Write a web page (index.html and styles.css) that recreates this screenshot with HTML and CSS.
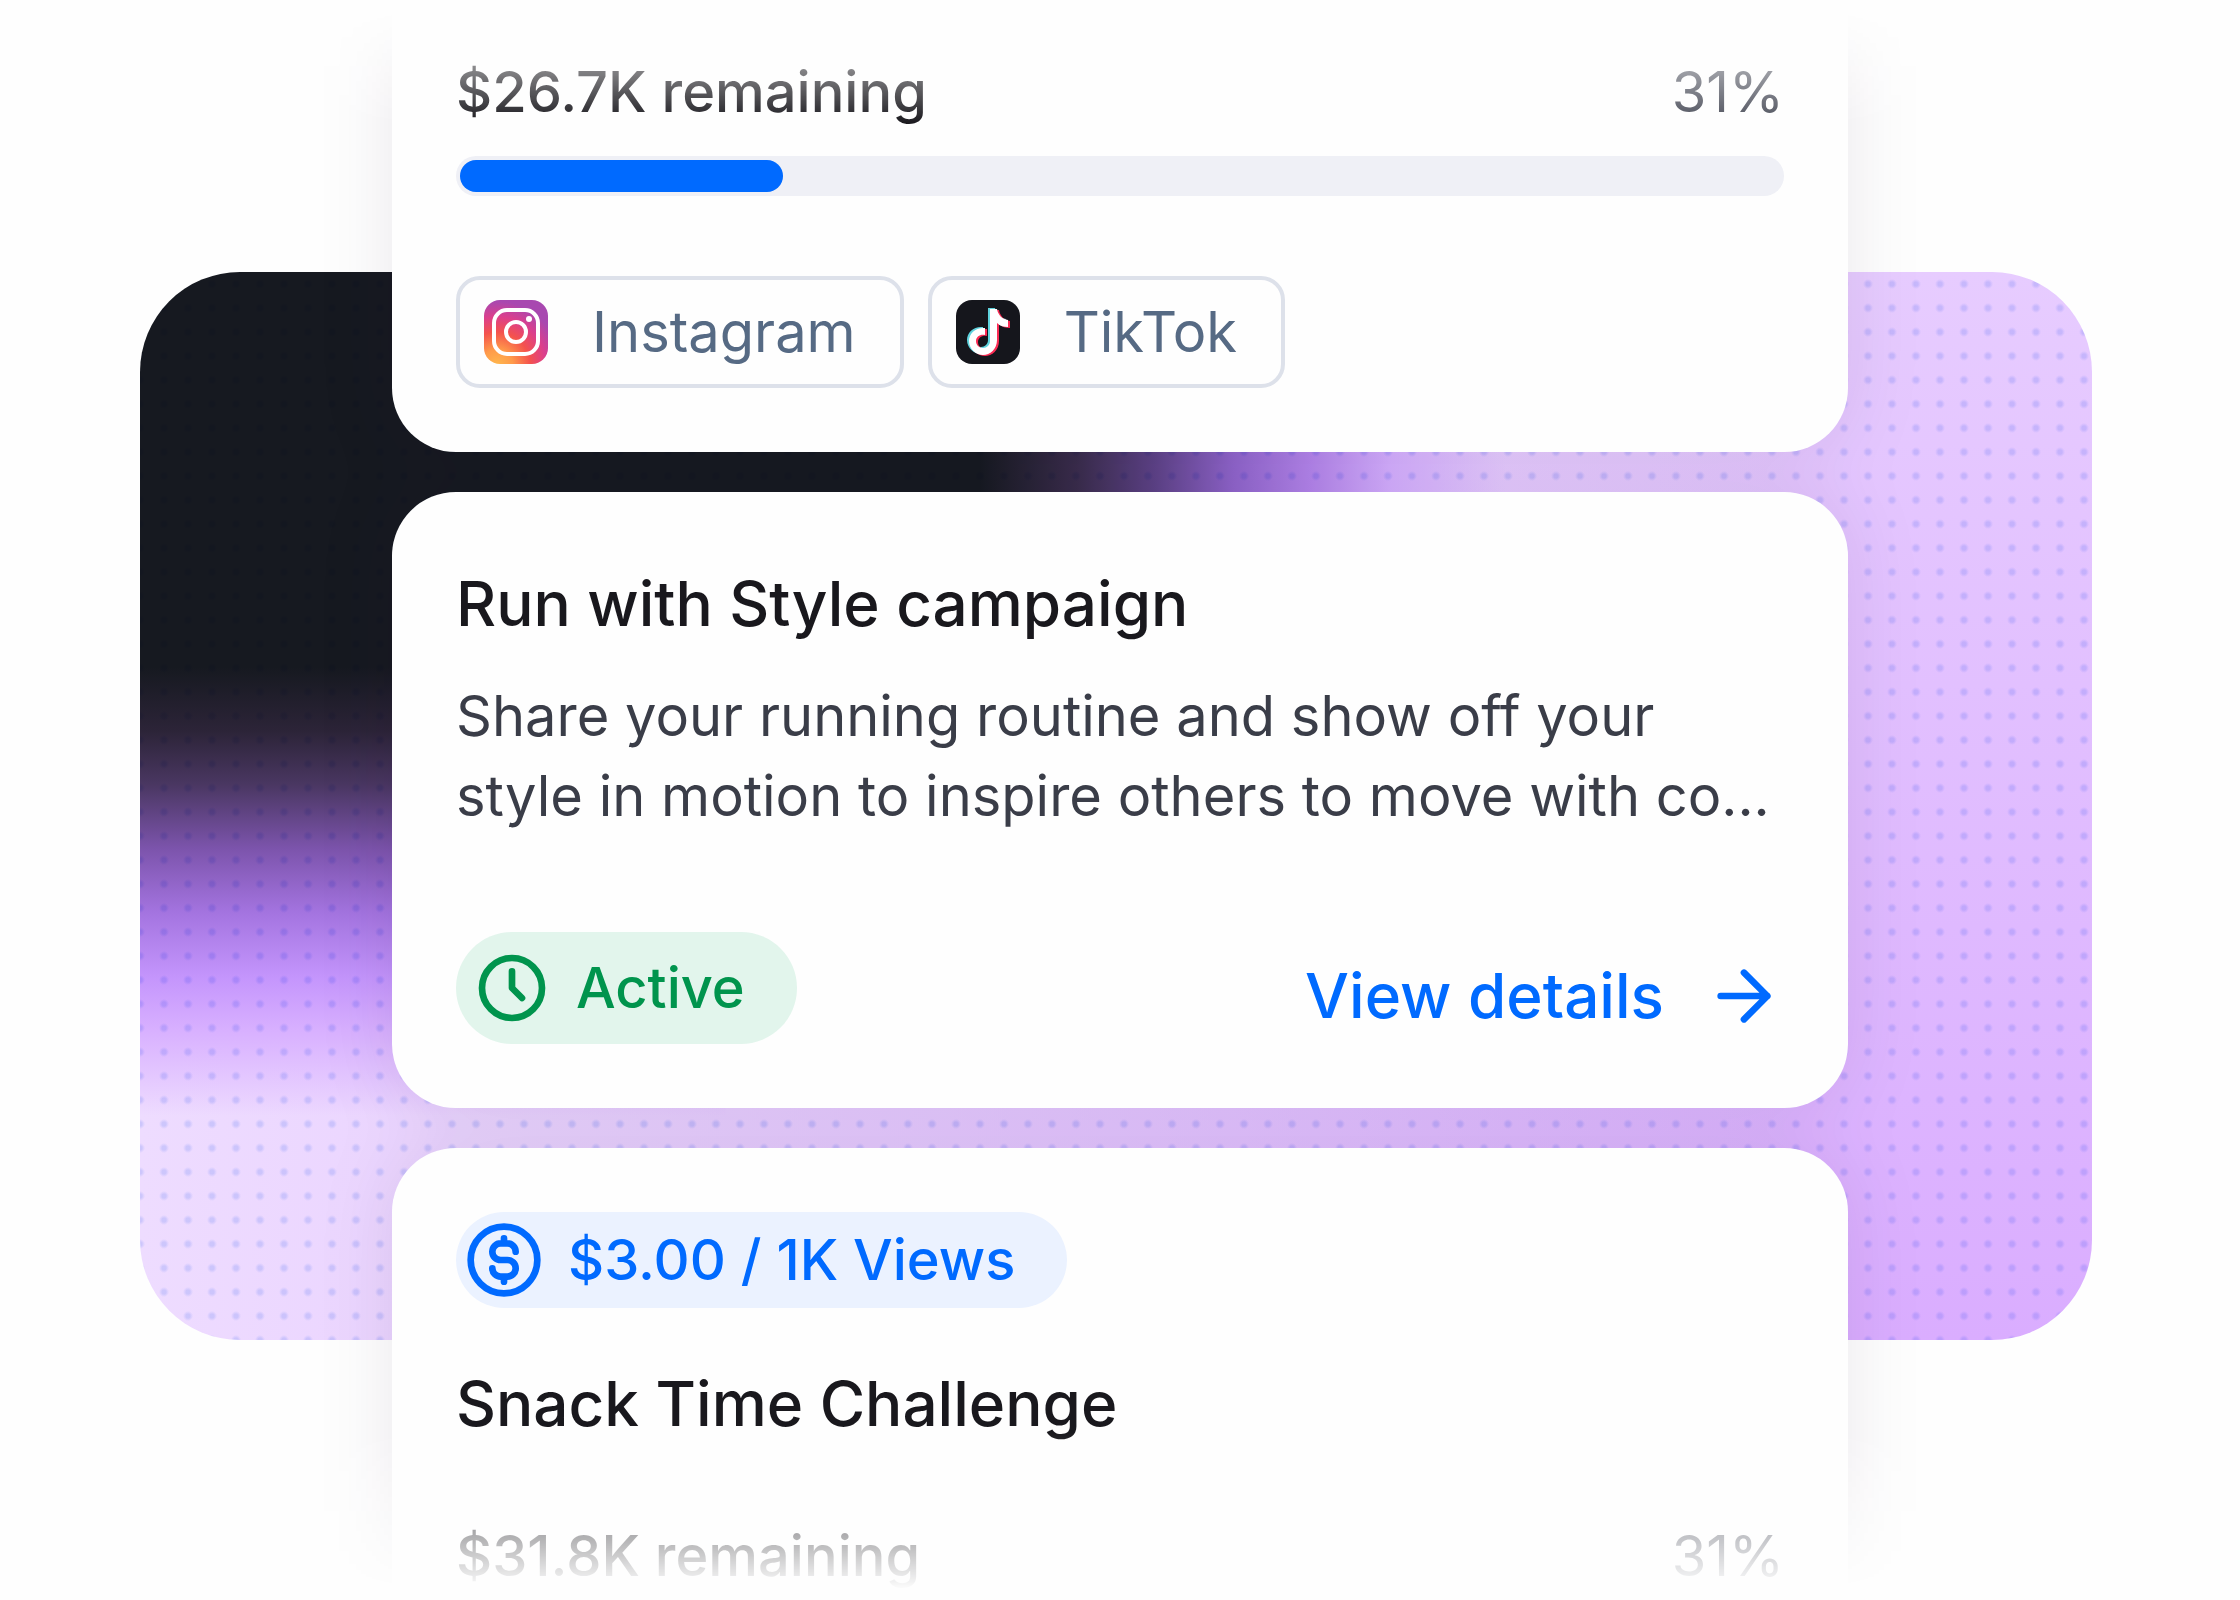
FILE: index.html
```html
<!DOCTYPE html>
<html lang="en">
<head>
    <meta charset="UTF-8">
    <meta name="viewport" content="width=device-width, initial-scale=1.0">
    <title>Campaigns</title>
    <link rel="stylesheet" href="styles.css">
</head>
<body>
    <main class="stage">
        <div class="panel"></div>

        <div class="cards">
            <article class="card card-first">
                <div class="budget">
                    <label class="budget-left" for="budget-1">$26.7K remaining</label>
                    <span class="budget-percent">31%</span>
                </div>
                <progress class="bar" id="budget-1" value="24.5" max="100"></progress>
                <ul class="platforms">
                    <li class="platform">
                        <svg class="platform-icon" viewBox="0 0 64 64" aria-hidden="true">
                            <defs>
                                <radialGradient id="ig-warm" cx="0.2" cy="1.02" r="1">
                                    <stop offset="0" stop-color="#ffb84d"/>
                                    <stop offset="0.25" stop-color="#ff9a4a"/>
                                    <stop offset="0.52" stop-color="#f4524d"/>
                                    <stop offset="0.76" stop-color="#dc3f8c"/>
                                    <stop offset="1" stop-color="#a848b0"/>
                                </radialGradient>
                            </defs>
                            <rect width="64" height="64" rx="16" fill="url(#ig-warm)"/>
                            <rect x="10" y="10" width="44" height="44" rx="13" fill="none" stroke="#fff" stroke-width="4"/>
                            <circle cx="32" cy="32" r="10" fill="none" stroke="#fff" stroke-width="4"/>
                            <circle cx="45" cy="19" r="3" fill="#fff"/>
                        </svg>
                        Instagram
                    </li>
                    <li class="platform">
                        <svg class="platform-icon" viewBox="0 0 64 64" aria-hidden="true">
                            <defs>
                                <path id="note" d="M34 9h7c1 6 5 10 11 11v7c-4 0-8-1-11-4v17c0 9-7 15-14 15s-14-6-14-14 7-14 16-13v7c-5-1-9 2-9 6s3 7 7 7 7-3 7-7z"/>
                            </defs>
                            <rect width="64" height="64" rx="16" fill="#15161c"/>
                            <use href="#note" x="-2" y="-1" fill="#5fd3de"/>
                            <use href="#note" x="2" y="1" fill="#fb2c55"/>
                            <use href="#note" fill="#fff"/>
                        </svg>
                        TikTok
                    </li>
                </ul>
            </article>

            <article class="card">
                <h2 class="title">Run with Style campaign</h2>
                <p class="description">Share your running routine and show off your<br>style in motion to inspire others to move with co...</p>
                <div class="card-footer">
                    <span class="pill pill-active">
                        <svg class="icon" viewBox="0 0 24 24" aria-hidden="true">
                            <circle cx="12" cy="12" r="9"/>
                            <path d="M12 7v5l3 3"/>
                        </svg>
                        Active
                    </span>
                    <a class="details" href="#">
                        View details
                        <svg class="icon" viewBox="0 0 24 24" aria-hidden="true">
                            <path d="M5 12h14M12 5l7 7-7 7"/>
                        </svg>
                    </a>
                </div>
            </article>

            <article class="card card-last">
                <span class="pill pill-rate">
                    <svg class="icon" viewBox="0 0 24 24" aria-hidden="true">
                        <circle cx="12" cy="12" r="10"/>
                        <path d="M15.5 9.5A2.5 2.5 0 0 0 13 7h-2a2.5 2.5 0 0 0 0 5h2a2.5 2.5 0 0 1 0 5h-2a2.5 2.5 0 0 1-2.5-2.5M12 5.5V7M12 17v1.5"/>
                    </svg>
                    $3.00 / 1K Views
                </span>
                <h2 class="title">Snack Time Challenge</h2>
                <div class="budget">
                    <span class="budget-left">$31.8K remaining</span>
                    <span class="budget-percent">31%</span>
                </div>
            </article>
        </div>
    </main>
</body>
</html>
```

FILE: styles.css
```css
* {
    box-sizing: border-box;
}

body {
    margin: 0;
    font-family: Inter, sans-serif;
    font-size: 56px;
    line-height: 72px;
    color: #19181d;
    background-color: #fefefe;
}

/* panel and cards share one grid cell, the cards fade out at both ends */
.stage {
    display: grid;
    grid-template: 100vh / 100%;
    height: 100vh;
    overflow: hidden;
    mask-image: linear-gradient(to bottom, transparent 8px, #000 124px, #000 calc(100% - 168px), transparent calc(100% - 10px));
}

.panel,
.cards {
    grid-area: 1 / 1;
}

.panel {
    margin: 272px 148px 260px 140px;
    border-radius: 100px;
    background-color: #e4c6ff;
    background-image:
        radial-gradient(circle, rgb(220, 230, 252) 2px, rgba(220, 230, 252, 0) 5px),
        linear-gradient(to right, #161920 0, #161920 43%, #3a2c4c 48%, #5e4288 52%, #9064cc 56%, #b484ec 60%, rgba(208, 166, 255, 0.8) 64%, rgba(228, 200, 255, 0) 70%),
        linear-gradient(to bottom, #161920 0, #161920 37%, #2c2438 43%, #4a3762 48%, #7c54ac 54%, #a474e0 60%, #c495fc 66%, #d8b0ff 71%, rgba(232, 208, 255, 0) 79%),
        linear-gradient(to right, #eedcff, rgba(238, 220, 255, 0) 85%),
        linear-gradient(to bottom, #e7ccff, #daadff);
    background-position: -12px 0, 0 0, 0 0, 0 0, 0 0;
    background-size: 24px 24px, 100% 37%, 30% 100%, 100% 100%, 100% 100%;
    background-repeat: repeat, no-repeat, no-repeat, no-repeat, no-repeat;
    background-blend-mode: multiply, normal, normal, normal, normal;
}

.cards {
    display: flex;
    flex-direction: column;
    gap: 40px;
    width: 65%;
    margin: 0 auto;
    filter: drop-shadow(0 0 36px rgba(24, 12, 44, 0.09));
}

.card {
    flex-shrink: 0;
    padding: 72px 64px 64px;
    border-radius: 64px;
    background-color: #fefefe;
}

.card-first {
    padding-top: 56px;
    border-radius: 0 0 64px 64px;
}

.card-last {
    padding-top: 64px;
    border-radius: 64px 64px 0 0;
}

.budget {
    display: flex;
    justify-content: space-between;
}

.budget-left {
    font-weight: 500;
}

.budget-percent {
    color: #4c4f5b;
}

.bar {
    display: block;
    appearance: none;
    width: 100%;
    height: 40px;
    margin-top: 28px;
    padding: 4px;
    border: none;
    border-radius: 20px;
    background-color: #eff0f6;
}

.bar::-webkit-progress-bar {
    background-color: transparent;
}

.bar::-webkit-progress-value {
    border-radius: 16px;
    background-color: #006aff;
}

.platforms {
    display: flex;
    gap: 24px;
    margin: 80px 0 0;
    padding: 0;
    list-style: none;
}

.platform {
    display: flex;
    align-items: center;
    gap: 44px;
    height: 112px;
    padding: 0 44px 0 24px;
    border: 4px solid #dde1ea;
    border-radius: 24px;
    color: #566a84;
}

.platform-icon {
    width: 64px;
    height: 64px;
}

.title {
    margin: 0;
    font-size: 62px;
    font-weight: 500;
    line-height: 80px;
}

.description {
    margin: 32px 0 0;
    line-height: 80px;
    color: #3a3d48;
    white-space: nowrap;
}

.card-footer {
    display: flex;
    justify-content: space-between;
    align-items: flex-end;
    margin-top: 96px;
}

.icon {
    width: 80px;
    height: 80px;
    fill: none;
    stroke: currentColor;
    stroke-width: 2;
    stroke-linecap: round;
    stroke-linejoin: round;
}

.pill {
    display: inline-flex;
    align-items: center;
    gap: 24px;
    border-radius: 56px;
    font-weight: 500;
}

.pill-active {
    height: 112px;
    padding: 0 52px 0 16px;
    color: #00944d;
    background-color: #e2f5ec;
}

.pill-rate {
    display: flex;
    width: fit-content;
    height: 96px;
    padding: 0 52px 0 8px;
    color: #006aff;
    background-color: #ebf2ff;
}

.details {
    display: flex;
    align-items: center;
    gap: 40px;
    height: 96px;
    font-size: 62px;
    font-weight: 500;
    color: #006aff;
    text-decoration: none;
}

.card-last .title {
    margin-top: 56px;
}

.card-last .budget {
    margin-top: 76px;
}
```
